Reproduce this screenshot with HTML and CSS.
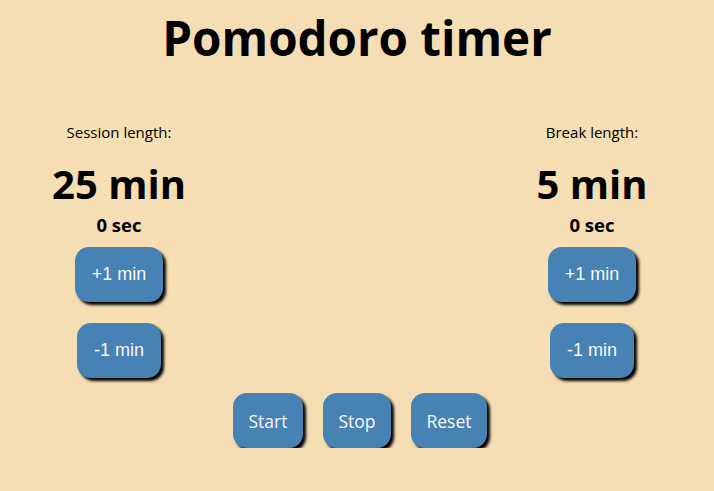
FILE: index.html
```html
<!DOCTYPE html>
<html>
<head>
<meta charset="utf-8">
<link rel="stylesheet" href="styles.css">
</head>
<body>
<h1 class="title">Pomodoro timer</h1>
<div class="columns">
  <div class="col">
    <div class="label">Session length:</div>
    <div class="big">25 min</div>
    <div class="sec">0 sec</div>
    <div class="stack">
      <button class="btn btn-arial">+1 min</button>
      <button class="btn btn-arial">-1 min</button>
    </div>
  </div>
  <div class="col">
    <div class="label">Break length:</div>
    <div class="big">5 min</div>
    <div class="sec">0 sec</div>
    <div class="stack">
      <button class="btn btn-arial">+1 min</button>
      <button class="btn btn-arial">-1 min</button>
    </div>
  </div>
</div>
<div class="controls">
  <button class="btn">Start</button>
  <button class="btn">Stop</button>
  <button class="btn">Reset</button>
</div>
</body>
</html>
```
FILE: styles.css
```css
html, body {
  margin: 0;
  padding: 0;
  background: #f5deb3;
  font-family: "Open Sans", "Noto Sans", sans-serif;
  color: #000;
}
.title {
  margin: 0;
  padding-top: 6px;
  font-size: 47.5px;
  line-height: 64px;
  font-weight: 700;
  text-align: center;
}
.columns {
  display: flex;
  justify-content: space-between;
  padding: 0 42px 0 39px;
  margin-top: 52px;
}
.col {
  width: 160px;
  display: flex;
  flex-direction: column;
  align-items: center;
}
.label {
  font-size: 15px;
  line-height: 20px;
}
.big {
  margin-top: 15px;
  font-size: 40px;
  line-height: 54px;
  font-weight: 700;
}
.sec {
  margin-top: 1px;
  font-size: 18.5px;
  line-height: 26px;
  font-weight: 700;
}
.stack {
  margin-top: 9px;
  display: flex;
  flex-direction: column;
  align-items: center;
  gap: 21px;
}
.btn {
  height: 55px;
  padding: 0 15.5px;
  border: none;
  border-radius: 14px;
  background: #4682b4;
  color: #f8f8f8;
  font-family: "Open Sans", sans-serif;
  font-size: 17.5px;
  box-shadow: 3px 3px 3px #000;
}
.btn-arial {
  font-family: "Liberation Sans", Arial, sans-serif;
  font-size: 18px;
  padding: 0 17px;
}
.controls {
  display: flex;
  justify-content: center;
  gap: 20px;
  margin-top: 15px;
  padding-left: 6px;
}
```
